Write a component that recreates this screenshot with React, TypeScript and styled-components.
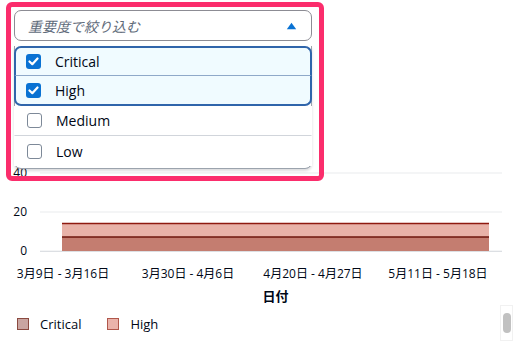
import React from 'react';
import styled, { createGlobalStyle } from 'styled-components';

const GlobalStyle = createGlobalStyle`
  html, body {
    margin: 0;
    padding: 0;
    background: #ffffff;
  }
  body {
    font-family: "Open Sans", "Noto Sans CJK JP", sans-serif;
    color: #000716;
  }
`;

const Page = styled.div`
  position: relative;
  width: 531px;
  height: 353px;
  overflow: hidden;
  background: #ffffff;
`;

const FilterArea = styled.div`
  padding: 10px 219px 0 14px;
`;

const SelectTrigger = styled.div`
  display: flex;
  align-items: center;
  justify-content: space-between;
  height: 29px;
  padding: 0 14px 0 13px;
  border: 1px solid #8c8c94;
  border-radius: 7px;
  background: #ffffff;
`;

const Placeholder = styled.span`
  font-style: italic;
  font-size: 14px;
  color: #5f6b7a;
`;

const Dropdown = styled.div`
  position: absolute;
  left: 14px;
  top: 46px;
  width: 298px;
  height: 123px;
  box-sizing: border-box;
  background: #ffffff;
  border: 1px solid #9ba3ad;
  border-top: none;
  border-radius: 0 0 7px 7px;
  box-shadow: 0 2px 3px rgba(0, 7, 22, 0.15);
  z-index: 2;
`;

type Pos = 'first' | 'last' | 'none';

const Option = styled.div<{ $selected?: boolean; $pos?: Pos; $divider?: boolean }>`
  display: flex;
  align-items: center;
  gap: 14px;
  height: 30px;
  box-sizing: border-box;
  padding-left: ${(p) => (p.$selected ? '10px' : '12px')};
  margin: 0 -1px;
  font-size: 14px;
  background: ${(p) => (p.$selected ? '#f0fbff' : '#ffffff')};
  border-left: ${(p) => (p.$selected ? '2px solid #2f65ab' : '1px solid transparent')};
  border-right: ${(p) => (p.$selected ? '2px solid #2f65ab' : '1px solid transparent')};
  border-top: ${(p) => (p.$pos === 'first' ? '2px solid #2f65ab' : 'none')};
  border-bottom: ${(p) =>
    p.$pos === 'last'
      ? '2px solid #2f65ab'
      : p.$pos === 'first'
      ? '1px solid #8fa9c9'
      : p.$divider
      ? '1px solid #d1d5db'
      : 'none'};
  border-radius: ${(p) =>
    p.$pos === 'first' ? '7px 7px 0 0' : p.$pos === 'last' ? '0 0 7px 7px' : '0'};
`;

const Box = styled.span<{ $checked?: boolean }>`
  display: inline-flex;
  align-items: center;
  justify-content: center;
  width: 15px;
  height: 15px;
  box-sizing: border-box;
  border-radius: 3px;
  background: ${(p) => (p.$checked ? '#0972d3' : '#ffffff')};
  border: ${(p) => (p.$checked ? 'none' : '1.5px solid #7d8998')};
`;

const Highlight = styled.div`
  position: absolute;
  left: 6px;
  top: 2px;
  width: 318px;
  height: 179px;
  box-sizing: border-box;
  border: 5px solid #fb2d6c;
  border-radius: 6px;
  pointer-events: none;
  z-index: 3;
`;

const ChartArea = styled.div`
  margin-top: 124px;
  display: flex;
  flex-direction: column;
`;

const AxisTitle = styled.div`
  text-align: center;
  font-size: 13px;
  font-weight: 700;
  line-height: 16px;
  margin-top: 3px;
  padding-left: 20px;
`;

const Legend = styled.div`
  display: flex;
  align-items: center;
  gap: 26px;
  padding: 11px 0 0 17px;
`;

const LegendItem = styled.div`
  display: flex;
  align-items: center;
  gap: 11px;
  font-size: 13px;
`;

const Swatch = styled.span<{ $fill: string; $line: string }>`
  width: 12px;
  height: 12px;
  box-sizing: border-box;
  background: ${(p) => p.$fill};
  border: 1px solid ${(p) => p.$line};
`;

const ScrollTrack = styled.div`
  position: absolute;
  left: 500px;
  top: 305px;
  width: 13px;
  height: 36px;
  box-sizing: border-box;
  border: 1px solid #f1f1f1;
  display: flex;
  justify-content: center;
  padding-top: 7px;
`;

const ScrollThumb = styled.div`
  width: 8px;
  height: 20px;
  border-radius: 4px;
  background: #c1c1c1;
`;

const Check = () => (
  <svg width="11" height="9" viewBox="0 0 11 9">
    <path d="M1.5 4.5 L4.3 7.2 L9.5 1.5" fill="none" stroke="#fff" strokeWidth="2.2" strokeLinecap="round" strokeLinejoin="round" />
  </svg>
);

const CaretUp = () => (
  <svg width="11" height="8" viewBox="0 0 11 8">
    <path d="M5.5 0.8 L10.2 7.2 L0.8 7.2 Z" fill="#0972d3" />
  </svg>
);

const options: { label: string; checked: boolean; pos: Pos; divider?: boolean }[] = [
  { label: 'Critical', checked: true, pos: 'first' },
  { label: 'High', checked: true, pos: 'last' },
  { label: 'Medium', checked: false, pos: 'none', divider: true },
  { label: 'Low', checked: false, pos: 'none' },
];

const ticks = [
  { label: '40', y: 8 },
  { label: '20', y: 47 },
  { label: '0', y: 86 },
];

const xLabels = [
  { label: '3月9日 - 3月16日', x: 63 },
  { label: '3月30日 - 4月6日', x: 188 },
  { label: '4月20日 - 4月27日', x: 313 },
  { label: '5月11日 - 5月18日', x: 438 },
];

const Chart = () => (
  <svg width="531" height="120" viewBox="0 0 531 120" style={{ display: 'block' }}>
    {ticks.map((t) => (
      <g key={t.label}>
        <line x1="40" x2="502" y1={t.y} y2={t.y} stroke="#e9ebed" strokeWidth="1" />
        <text
          x="27"
          y={t.y + 4}
          textAnchor="end"
          fontSize="12"
          fill="#000716"
          fontFamily='"Open Sans", sans-serif'
        >
          {t.label}
        </text>
      </g>
    ))}
    <rect x="62" y="72" width="427" height="14" fill="#c47d70" />
    <rect x="62" y="58" width="427" height="14" fill="#e8b2a8" />
    <line x1="62" x2="489" y1="58.5" y2="58.5" stroke="#8e1a10" strokeWidth="1.5" />
    <line x1="62" x2="489" y1="72" y2="72" stroke="#6e160c" strokeWidth="1.5" />
    <line x1="40" x2="502" y1="86.5" y2="86.5" stroke="#dcdfe3" strokeWidth="1" />
    {xLabels.map((l) => (
      <text
        key={l.label}
        x={l.x}
        y="113"
        textAnchor="middle"
        fontSize="12"
        fill="#000716"
        fontFamily='"Open Sans", "Noto Sans CJK JP", sans-serif'
      >
        {l.label}
      </text>
    ))}
  </svg>
);

const App: React.FC = () => {
  return (
    <Page>
      <GlobalStyle />
      <FilterArea>
        <SelectTrigger>
          <Placeholder>重要度で絞り込む</Placeholder>
          <CaretUp />
        </SelectTrigger>
      </FilterArea>
      <Dropdown>
        {options.map((o) => (
          <Option key={o.label} $selected={o.checked} $pos={o.pos} $divider={o.divider}>
            <Box $checked={o.checked}>{o.checked && <Check />}</Box>
            {o.label}
          </Option>
        ))}
      </Dropdown>
      <Highlight />
      <ChartArea>
        <Chart />
        <AxisTitle>日付</AxisTitle>
        <Legend>
          <LegendItem>
            <Swatch $fill="#c9a5a1" $line="#8b4a40" />
            Critical
          </LegendItem>
          <LegendItem>
            <Swatch $fill="#eab3ab" $line="#b0574b" />
            High
          </LegendItem>
        </Legend>
      </ChartArea>
      <ScrollTrack>
        <ScrollThumb />
      </ScrollTrack>
    </Page>
  );
};

export default App;
